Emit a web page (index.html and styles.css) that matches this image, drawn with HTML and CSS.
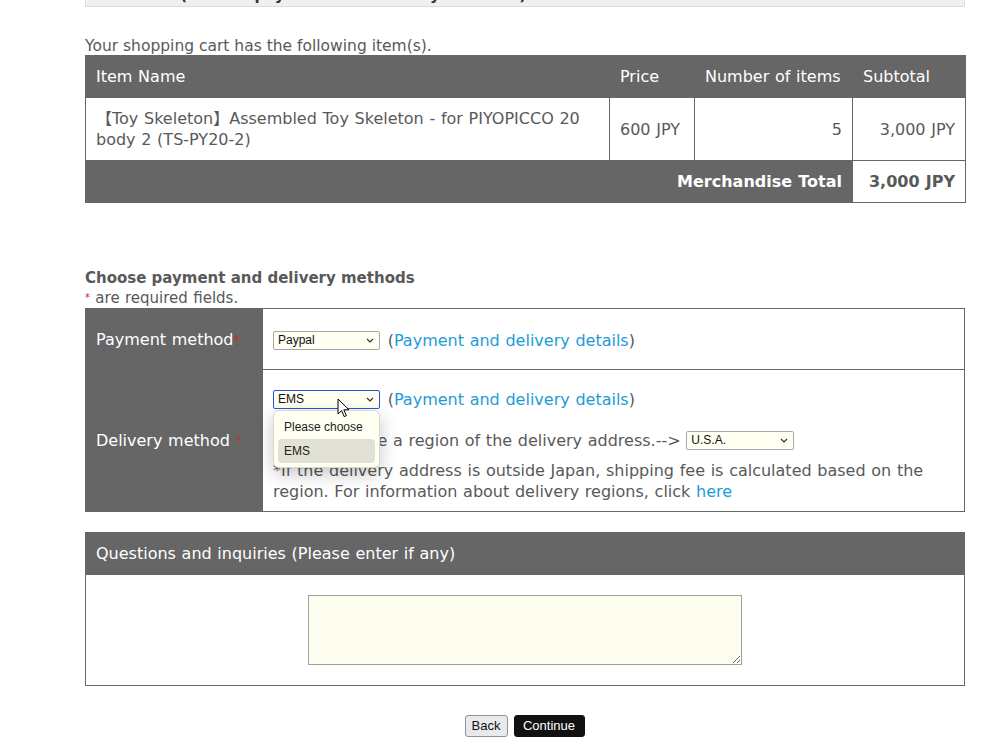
FILE: index.html
```html
<!DOCTYPE html>
<html lang="en">
<head>
<meta charset="utf-8">
<title>Checkout</title>
<link rel="stylesheet" href="styles.css">
</head>
<body>
<div class="page">
  <div class="step">Checkout (Choose payment and delivery methods)</div>
  <p class="lead">Your shopping cart has the following item(s).</p>
  <table class="cart">
    <colgroup>
      <col class="c-name"><col class="c-price"><col class="c-qty"><col class="c-sub">
    </colgroup>
    <thead>
      <tr><th>Item Name</th><th>Price</th><th>Number of items</th><th>Subtotal</th></tr>
    </thead>
    <tbody>
      <tr>
        <td><span class="cjk">【</span>Toy Skeleton<span class="cjk">】</span>Assembled Toy Skeleton - for PIYOPICCO 20 body 2 (TS-PY20-2)</td>
        <td>600 JPY</td>
        <td class="num">5</td>
        <td class="num">3,000 JPY</td>
      </tr>
      <tr class="total">
        <th colspan="3">Merchandise Total</th>
        <td>3,000 JPY</td>
      </tr>
    </tbody>
  </table>

  <h3 class="section">Choose payment and delivery methods</h3>
  <p class="req"><span class="ast">*</span> are required fields.</p>

  <table class="form">
    <tr class="r-pay">
      <th>Payment method<span class="ast">*</span></th>
      <td>
        <span class="sel">
          <select class="select"><option>Paypal</option></select>
          <svg class="chev" width="8" height="5" viewBox="0 0 8 5"><path d="M1 1l3 3 3-3" fill="none" stroke="#333" stroke-width="1.2"/></svg>
        </span>
        (<a href="#">Payment and delivery details</a>)
      </td>
    </tr>
    <tr class="r-del">
      <th>Delivery method <span class="ast">*</span></th>
      <td>
        <div class="line1">
          <span class="sel">
            <select class="select focus"><option>EMS</option></select>
            <svg class="chev" width="8" height="5" viewBox="0 0 8 5"><path d="M1 1l3 3 3-3" fill="none" stroke="#333" stroke-width="1.2"/></svg>
            <div class="popup">
              <div class="opt">Please choose</div>
              <div class="opt on">EMS</div>
            </div>
            <svg class="cursor" width="13" height="20" viewBox="0 0 13 20"><path d="M1 1v15l3.6-3.4 2.6 6 2.2-1-2.6-5.8H12z" fill="#fff" stroke="#000" stroke-width="1" stroke-linejoin="round"/></svg>
          </span>
          (<a href="#">Payment and delivery details</a>)
        </div>
        <div class="line2">Please choose a region of the delivery address.--&gt;
          <span class="sel">
            <select class="select wide"><option>U.S.A.</option></select>
            <svg class="chev" width="8" height="5" viewBox="0 0 8 5"><path d="M1 1l3 3 3-3" fill="none" stroke="#333" stroke-width="1.2"/></svg>
          </span>
        </div>
        <div class="note">*If the delivery address is outside Japan, shipping fee is calculated based on the region. For information about delivery regions, click <a href="#">here</a></div>
      </td>
    </tr>
  </table>

  <table class="qa">
    <tr><th>Questions and inquiries (Please enter if any)</th></tr>
    <tr><td><textarea class="memo"></textarea></td></tr>
  </table>

  <div class="buttons">
    <button class="btn back" type="button">Back</button>
    <button class="btn next" type="button">Continue</button>
  </div>
</div>
</body>
</html>
```
FILE: styles.css
```css
html, body {
  margin: 0;
  padding: 0;
  background: #fff;
}
body {
  font-family: "DejaVu Sans", Verdana, sans-serif;
  font-size: 16px;
  word-spacing: 0.6px;
  color: #595959;
  overflow: hidden;
}
a {
  color: #1e9bd7;
  text-decoration: none;
}
.cjk {
  font-family: "Noto Sans CJK JP", sans-serif;
  line-height: 0;
}
.page {
  width: 880px;
  margin-left: 85px;
}
.step {
  margin-top: -22px;
  padding: 6px 10px 0;
  font-size: 15px;
  line-height: 21px;
  background: #f0f0f0;
  border: 1px solid #dcdcdc;
  font-weight: bold;
  color: #333;
}
.lead {
  margin: 31px 0 0;
  font-size: 15.5px;
  word-spacing: 0;
  line-height: 17px;
}
table {
  border-collapse: collapse;
  width: 880px;
  table-layout: fixed;
}
.cart th, .cart td {
  border: 1px solid #666;
  padding: 10px;
  line-height: 21px;
  text-align: left;
  vertical-align: middle;
}
.cart th {
  background: #666;
  color: #fff;
  font-weight: normal;
}
.c-name { width: 524px; }
.c-price { width: 85px; }
.c-qty { width: 158px; }
.c-sub { width: 113px; }
.cart td.num { text-align: right; }
.cart .total th {
  text-align: right;
  font-weight: bold;
}
.cart .total td {
  font-weight: bold;
  text-align: right;
}
.section {
  margin: 66px 0 0;
  font-size: 15px;
  word-spacing: 0;
  line-height: 19px;
  font-weight: bold;
  color: #595959;
}
.req {
  margin: 0;
  font-size: 15px;
  line-height: 19px;
}
.ast {
  color: #e0141e;
  font-size: 10px;
  vertical-align: 2px;
}
.form th, .form td {
  border: 1px solid #666;
  line-height: 21px;
  vertical-align: middle;
  text-align: left;
}
.form th {
  width: 156px;
  background: #666;
  color: #fff;
  font-weight: normal;
  padding: 0 10px;
}
.form th .ast { margin-left: 1px; }
.r-pay td { padding: 21px 10px 18px; }
.r-del td { padding: 19px 10px 9px; }
.line2 { margin-top: 20px; }
.note { margin-top: 9px; }
.sel {
  position: relative;
  display: inline-block;
  vertical-align: top;
  margin-top: 1px;
  margin-right: 2px;
}
.select {
  appearance: none;
  -webkit-appearance: none;
  display: block;
  width: 107px;
  height: 19px;
  margin: 0;
  padding: 0 18px 0 4px;
  border: 1px solid #a8a8a8;
  border-radius: 2px;
  background: #fffff2;
  font-family: "Liberation Sans", Arial, sans-serif;
  font-size: 12px;
  color: #111;
  line-height: 17px;
}
.select.wide { width: 108px; }
.select.focus { border-color: #1c5cd8; }
.chev {
  position: absolute;
  right: 6px;
  top: 7px;
}
.popup {
  position: absolute;
  left: 0;
  top: 20px;
  width: 97px;
  padding: 4px 4px;
  background: #fffff2;
  border: 1px solid #d8d8d0;
  border-radius: 6px;
  box-shadow: 0 6px 18px rgba(0,0,0,0.22);
  font-family: "Liberation Sans", Arial, sans-serif;
  font-size: 12px;
  word-spacing: 0;
  line-height: 24px;
  color: #222;
  z-index: 5;
}
.opt {
  height: 24px;
  padding-left: 6px;
  border-radius: 4px;
}
.opt.on { background: #e1e1d5; }
.cursor {
  position: absolute;
  left: 64px;
  top: 8px;
  z-index: 6;
}
.qa {
  margin-top: 20px;
}
.qa th, .qa td {
  border: 1px solid #666;
  line-height: 21px;
  text-align: left;
}
.qa th {
  background: #666;
  color: #fff;
  font-weight: normal;
  padding: 10px;
}
.qa td {
  padding: 20px 10px;
}
.memo {
  display: block;
  margin: 0 auto;
  width: 434px;
  height: 70px;
  box-sizing: border-box;
  border: 1px solid #a0a0a0;
  background: #fefef0;
  resize: both;
}
.buttons {
  margin-top: 29px;
  display: flex;
  justify-content: center;
  gap: 6px;
  padding-right: 1px;
}
.btn {
  height: 22px;
  margin: 0;
  font-family: "Liberation Sans", Arial, sans-serif;
  font-size: 13px;
  line-height: 18px;
  border-radius: 3px;
}
.back {
  width: 43px;
  padding: 0;
  background: #e9e9ed;
  border: 1px solid #8f8f9d;
  color: #111;
}
.next {
  width: 71px;
  padding: 0;
  background: #111;
  border: 1px solid #111;
  color: #fff;
}
```
